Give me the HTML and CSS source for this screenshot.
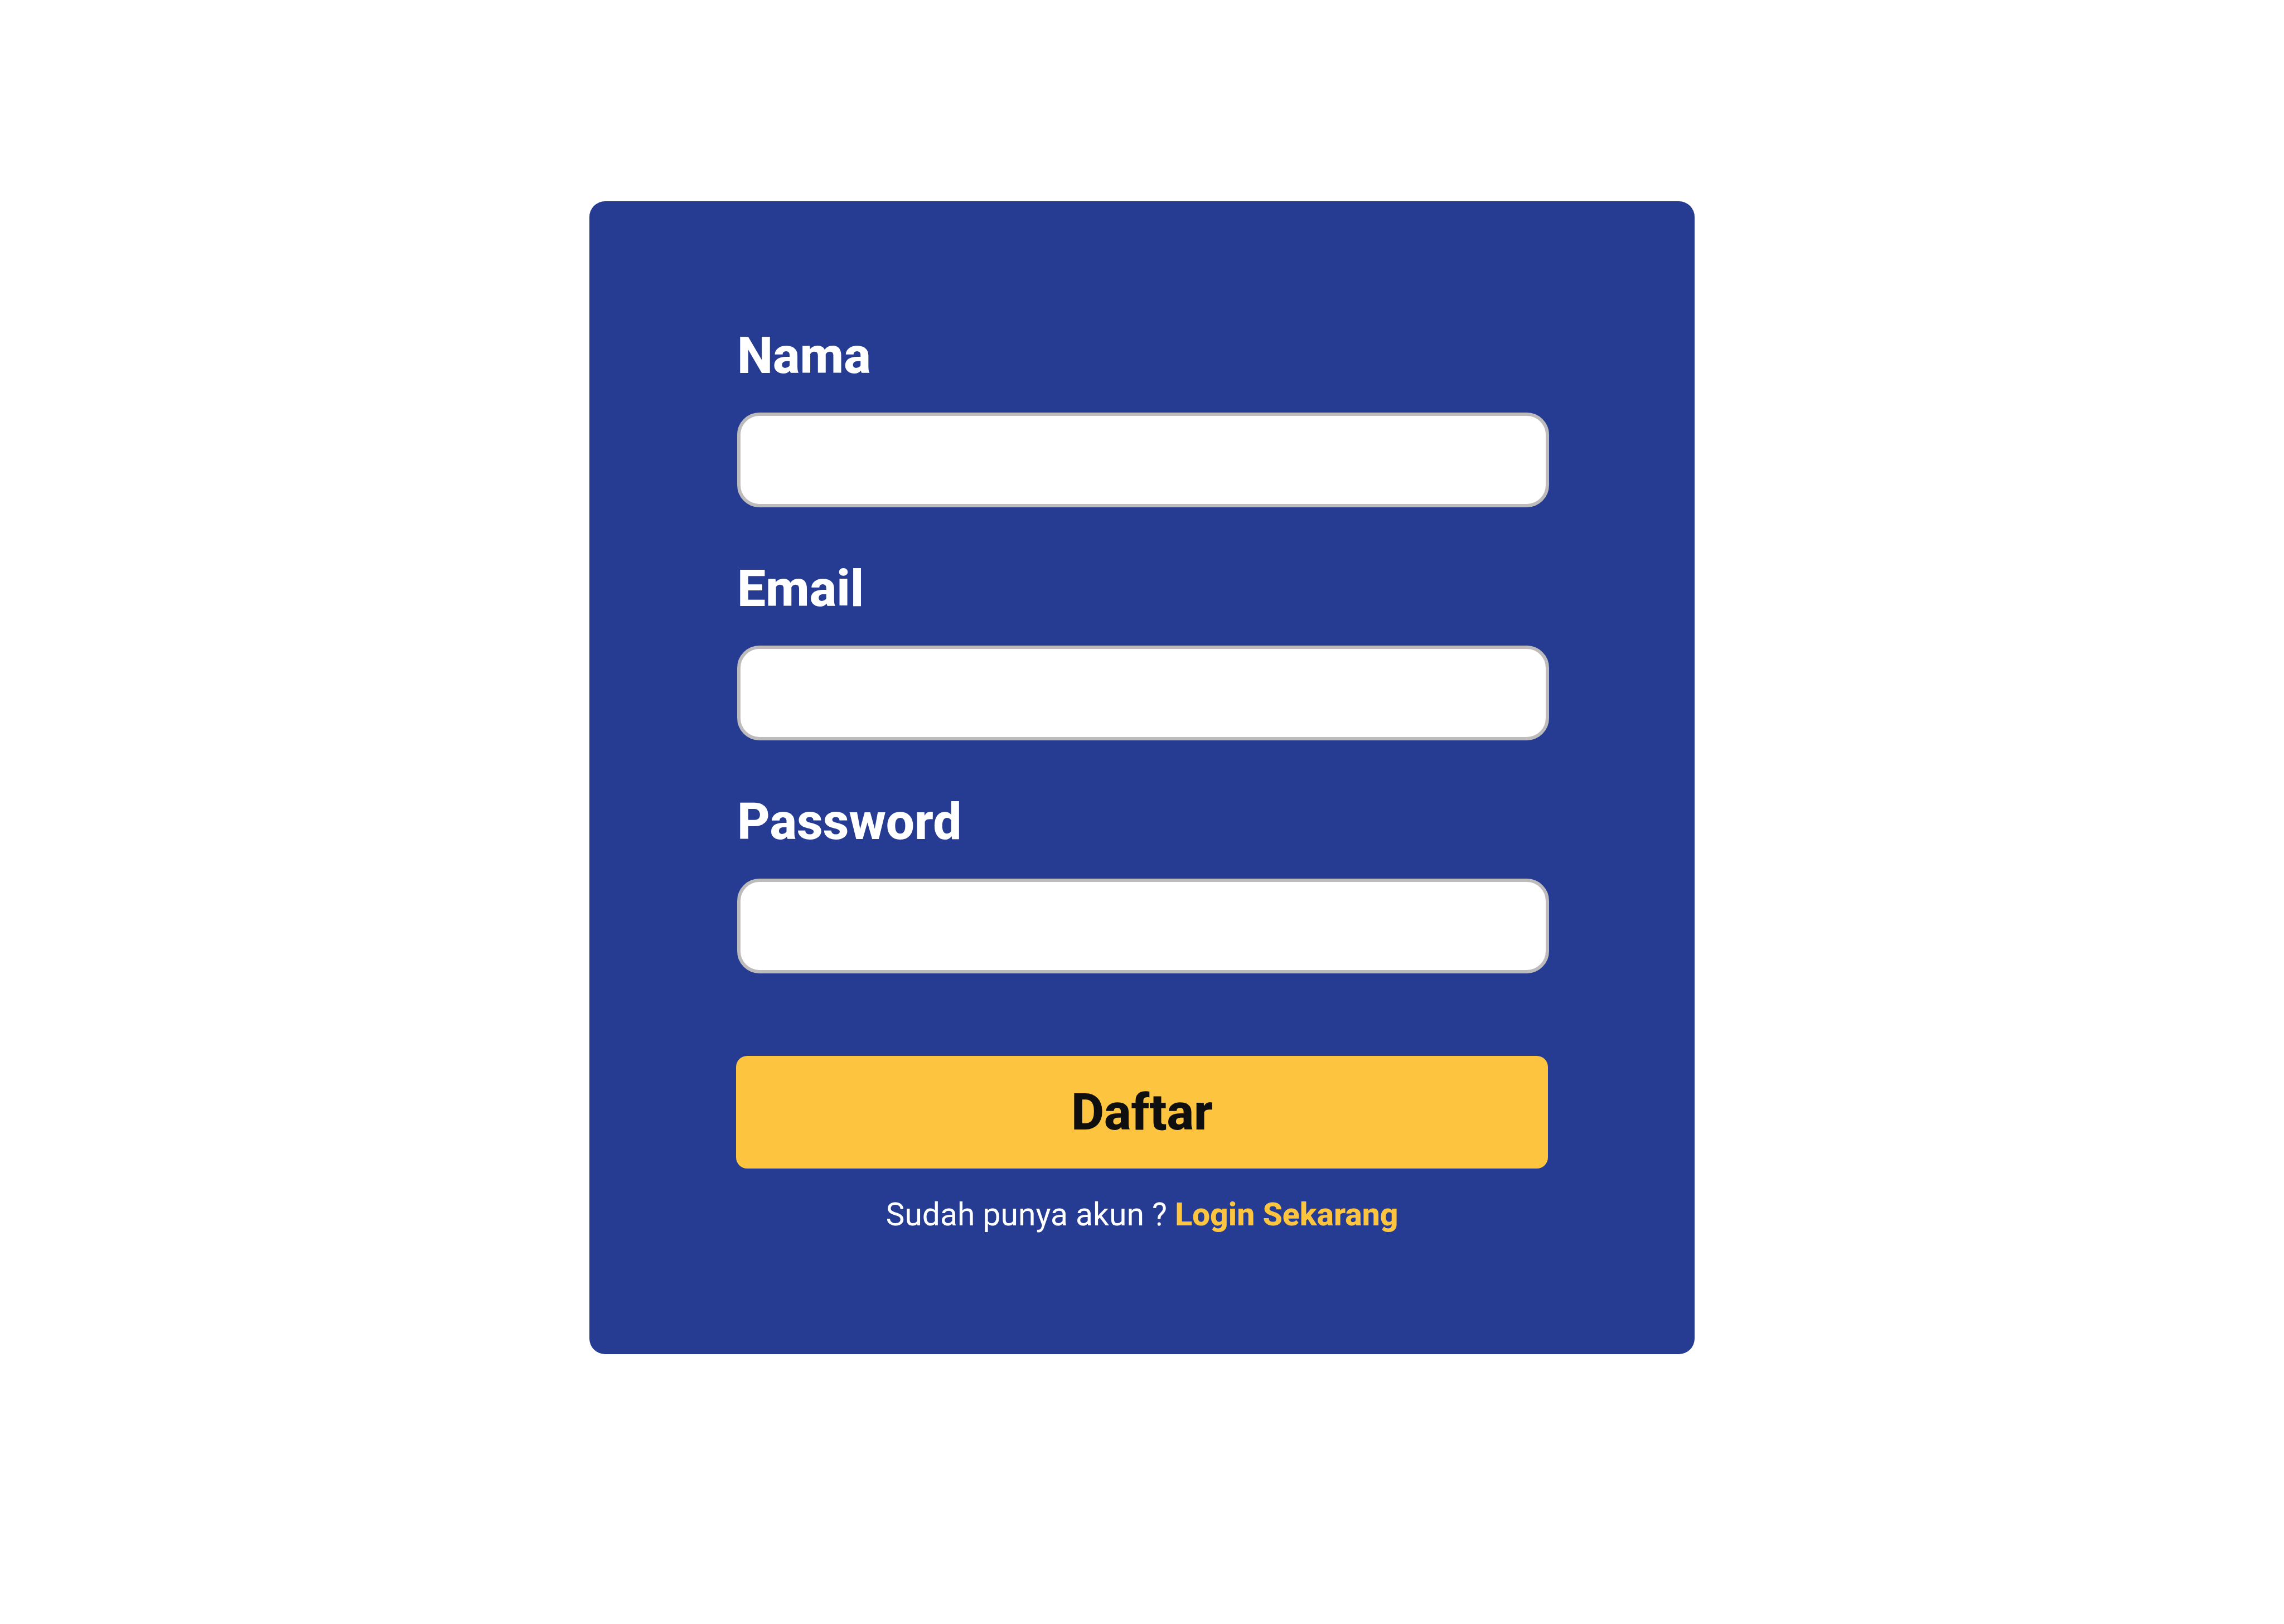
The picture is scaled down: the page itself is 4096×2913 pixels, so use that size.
FILE: index.html
```html
<!DOCTYPE html>
<html lang="id">
<head>
  <meta charset="utf-8">
  <meta name="viewport" content="width=device-width, initial-scale=1">
  <title>Daftar</title>
  <link rel="stylesheet" href="styles.css">
</head>
<body>
  <main class="page">
    <form class="card">
      <div class="fields">
        <div class="field">
          <label class="label" for="nama">Nama</label>
          <input class="input" id="nama" name="nama" type="text">
        </div>
        <div class="field">
          <label class="label" for="email">Email</label>
          <input class="input" id="email" name="email" type="email">
        </div>
        <div class="field">
          <label class="label" for="password">Password</label>
          <input class="input" id="password" name="password" type="password">
        </div>
      </div>
      <button class="submit" type="submit">Daftar</button>
      <p class="hint">Sudah punya akun ? <a class="link" href="#login">Login Sekarang</a></p>
    </form>
  </main>
</body>
</html>
```
FILE: styles.css
```css
* {
  box-sizing: border-box;
}

body {
  margin: 0;
  background: #ffffff;
  font-family: Roboto, "Liberation Sans", sans-serif;
}

.page {
  display: flex;
  justify-content: center;
  padding: 361px 24px;
}

.card {
  display: flex;
  flex-direction: column;
  width: 100%;
  max-width: 1982px;
  padding: 223px 263px 216px;
  border-radius: 28px;
  background: #263c92;
}

.fields {
  display: flex;
  flex-direction: column;
  gap: 92px;
  margin: 0 -2px 148px 2px;
}

.field {
  display: flex;
  flex-direction: column;
  gap: 48px;
}

.label {
  color: #ffffff;
  font-size: 91px;
  font-weight: 800;
  line-height: 108px;
}

.input {
  width: 100%;
  height: 170px;
  padding: 0 40px;
  border: 6px solid #bdbbbc;
  border-radius: 40px;
  background: #ffffff;
  color: #0f0f0f;
  font: inherit;
  font-size: 57px;
}

.submit {
  height: 202px;
  margin-bottom: 49px;
  padding: 0;
  border: 0;
  border-radius: 20px;
  background: #fdc43f;
  color: #0f0f0f;
  font: inherit;
  font-size: 91px;
  font-weight: 800;
  line-height: 108px;
  cursor: pointer;
}

.hint {
  margin: 0;
  color: #ffffff;
  font-size: 57px;
  line-height: 68px;
  text-align: center;
}

.link {
  color: #fdc43f;
  font-weight: 800;
  text-decoration: none;
}
```
